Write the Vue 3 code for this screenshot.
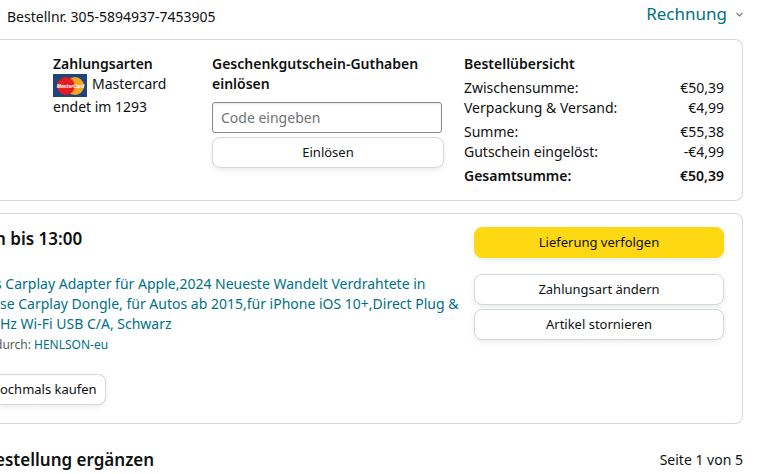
<template>
    <main class="page">
        <header class="order-header">
            <span class="order-number">Bestellnr. 305-5894937-7453905</span>
            <a href="#" class="invoice-link">
                Rechnung
                <svg width="7" height="5" viewBox="0 0 7 5" aria-hidden="true">
                    <path d="M0.5 0.8 L3.5 3.8 L6.5 0.8" fill="none" stroke="#6f7373" stroke-width="1.2" />
                </svg>
            </a>
        </header>

        <section class="card overview">
            <!-- Payment method -->
            <div class="payment">
                <h2>Zahlungsarten</h2>
                <div class="payment-card">
                    <svg class="card-logo" width="34" height="23" viewBox="0 0 34 23" aria-hidden="true">
                        <rect width="34" height="23" fill="#20447c" />
                        <circle cx="22" cy="12" r="9" fill="#f6a623" />
                        <circle cx="13" cy="12" r="9" fill="#e51b20" />
                        <path d="M17.5 4.2 A9 9 0 0 1 17.5 19.8" fill="none" stroke="#f08a25" stroke-width="1" />
                        <text x="17.5" y="14" text-anchor="middle" class="logo-text">MasterCard</text>
                    </svg>
                    <span>Mastercard</span>
                </div>
                <div>endet im 1293</div>
            </div>

            <!-- Gift card -->
            <form class="gift-card" @submit.prevent>
                <h2><label for="gift-code">Geschenkgutschein-Guthaben einlösen</label></h2>
                <input id="gift-code" v-model="giftCode" type="text" placeholder="Code eingeben" class="code-input" />
                <button type="submit" class="btn">Einlösen</button>
            </form>

            <!-- Order totals -->
            <div class="summary">
                <h2>Bestellübersicht</h2>
                <dl v-for="(group, index) in totals" :key="index" class="totals">
                    <div v-for="row in group" :key="row.label" class="total-row" :class="{ grand: row.grand }">
                        <dt>{{ row.label }}</dt>
                        <dd>{{ row.value }}</dd>
                    </div>
                </dl>
            </div>
        </section>

        <section class="card shipment">
            <div class="shipment-info">
                <h1 class="cut">n bis 13:00</h1>
                <a href="#" class="product-link">
                    <span class="cut">s Carplay Adapter für Apple,2024 Neueste Wandelt Verdrahtete in</span>
                    <span>se Carplay Dongle, für Autos ab 2015,für iPhone iOS 10+,Direct Plug &amp;</span>
                    <span>Hz Wi-Fi USB C/A, Schwarz</span>
                </a>
                <p class="seller cut">durch: <a href="#">HENLSON-eu</a></p>
                <button type="button" class="btn buy-again">ochmals kaufen</button>
            </div>
            <div class="actions">
                <button type="button" class="btn primary">Lieferung verfolgen</button>
                <button type="button" class="btn">Zahlungsart ändern</button>
                <button type="button" class="btn">Artikel stornieren</button>
            </div>
        </section>

        <footer class="more">
            <h2 class="more-title cut">estellung ergänzen</h2>
            <span>Seite 1 von 5</span>
        </footer>
    </main>
</template>

<script setup>
import { ref } from 'vue';

const giftCode = ref('');

const totals = [
    [
        { label: 'Zwischensumme:', value: '€50,39' },
        { label: 'Verpackung & Versand:', value: '€4,99' },
    ],
    [
        { label: 'Summe:', value: '€55,38' },
        { label: 'Gutschein eingelöst:', value: '-€4,99' },
    ],
    [{ label: 'Gesamtsumme:', value: '€50,39', grand: true }],
];
</script>

<style>
body {
    margin: 0;
    background: #fff;
}
</style>

<style scoped>
.page {
    box-sizing: border-box;
    padding-right: 22px;
    overflow: hidden;
    font-family: "Noto Sans", "Open Sans", sans-serif;
    font-size: 14px;
    line-height: 20px;
    color: #0f1111;
}

h1,
h2,
p,
dl,
dd {
    margin: 0;
}

h1 {
    font-size: 17px;
    line-height: 24px;
    font-weight: 600;
    white-space: nowrap;
}

h2 {
    font-size: 14px;
    line-height: 20px;
    font-weight: 600;
}

a {
    color: #007185;
    text-decoration: none;
}

.order-header {
    display: flex;
    justify-content: space-between;
    height: 39px;
    padding-left: 7px;
}

.order-number {
    padding-top: 7px;
}

.invoice-link {
    display: flex;
    align-items: center;
    gap: 9px;
    height: 28px;
    font-size: 17px;
}

.card {
    border: 1px solid #d5d9d9;
    border-left: none;
    border-radius: 0 8px 8px 0;
    padding: 14px 18px 14px 0;
    margin-bottom: 12px;
}

.overview {
    display: grid;
    grid-template-columns: 139fr 232fr 260fr;
    gap: 20px;
    padding-left: 53px;
}

.payment-card {
    display: flex;
    gap: 5px;
    height: 23px;
}

.card-logo {
    flex: none;
}

.logo-text {
    font-size: 5px;
    font-weight: 700;
    font-style: italic;
    fill: #fff;
}

.gift-card {
    display: flex;
    flex-direction: column;
}

.code-input {
    box-sizing: border-box;
    height: 31px;
    margin: 8px 2px 4px 0;
    padding: 0 8px;
    border: 1px solid #888c8c;
    border-radius: 3px;
    font: inherit;
    color: #0f1111;
    box-shadow: 0 1px 2px rgba(15, 17, 17, 0.1) inset;
}

.code-input::placeholder {
    color: #6f7373;
    opacity: 1;
}

.btn {
    height: 31px;
    padding: 0 10px 2px;
    border: 1px solid #d5d9d9;
    border-radius: 8px;
    background: #fff;
    box-shadow: 0 2px 5px rgba(213, 217, 217, 0.5);
    font-family: inherit;
    font-size: 13px;
    color: #0f1111;
    cursor: pointer;
}

.btn:hover {
    background: #f7fafa;
}

.totals {
    margin-top: 4px;
}

.total-row {
    display: flex;
    justify-content: space-between;
}

.grand {
    font-weight: 600;
}

.shipment {
    display: flex;
    justify-content: space-between;
    min-height: 182px;
    padding-top: 13px;
}

.shipment-info {
    flex: 1;
    min-width: 0;
}

.cut {
    margin-left: -5px;
}

.product-link {
    display: block;
    margin-top: 23px;
}

.product-link span {
    display: block;
    white-space: nowrap;
}

.seller {
    margin-top: 1px;
    font-size: 12px;
    color: #565959;
}

.buy-again {
    display: block;
    margin-top: 19px;
    padding-left: 0;
    padding-right: 8px;
    border-left: none;
    border-radius: 0 8px 8px 0;
}

.actions {
    display: flex;
    flex-direction: column;
    gap: 4px;
    width: 250px;
}

.primary,
.primary:hover {
    margin-bottom: 12px;
    border-color: #ffd814;
    background: #ffd814;
}

.more {
    display: flex;
    justify-content: space-between;
    align-items: center;
    margin-top: 24px;
}

.more-title {
    font-size: 17px;
    line-height: 24px;
    white-space: nowrap;
}
</style>
